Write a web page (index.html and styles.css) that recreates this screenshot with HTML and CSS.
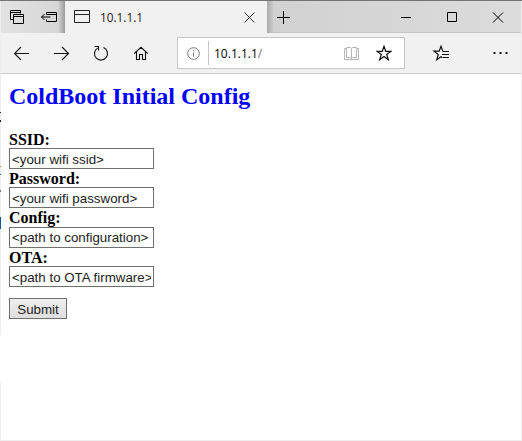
FILE: index.html
```html
<!DOCTYPE html>
<html lang="en">
<head>
<meta charset="utf-8">
<title>ColdBoot Initial Config</title>
<link rel="stylesheet" href="styles.css">
</head>
<body>
<div class="desktop-top"></div>
<div class="desktop-left"><i class="m1"></i><i class="m2"></i><i class="m3"></i><i class="m4"></i><i class="m5"></i><i class="m6"></i></div>
<div class="window">
  <header class="titlebar">
    <div class="tab-tools">
      <svg width="64" height="32" viewBox="0 0 64 32" fill="none" stroke="#000">
        <path d="M12.5 18.5h-3v-9h10v3M9.5 11.5h10M12.5 13.5h10v9h-10zM12.5 15.5h10"/>
        <path d="M45.5 13.500v-2h10v9h-10v-2M45.500 13.500h10M40.500 16h9M43.500 13l-3 3 3 3"/>
      </svg>
    </div>
    <div class="tab">
      <svg class="page-icon" width="16" height="14" fill="none" stroke="#222"><path d="M.5 .5h15v12H.5zM.5 4.500h15"/></svg>
      <span class="tab-title">10.1.1.1</span>
      <svg class="tab-close" width="11" height="11" fill="none" stroke="#333"><path d="M.5.5l10 10M10.500.5l-10 10"/></svg>
    </div>
    <div class="title-rest">
      <svg width="254" height="32" fill="none" stroke="#000">
        <path d="M10 16.500h13M16.500 10v13"/>
        <path d="M134 16.500h10M180.500 11.500h9v9h-9zM226 11.500l10 10M236 11.500l-10 10"/>
      </svg>
    </div>
  </header>
  <nav class="toolbar">
    <svg class="nav-icons" width="176" height="40" fill="none" stroke="#111" stroke-width="1.1">
      <path d="M13.500 20.500H28M20 14l-6.500 6.500L20 27"/>
      <path d="M53 20.500h14.500M61 14l6.500 6.500L61 27"/>
      <path d="M102.500 14.600a6.500 6.500 0 1 1-6 .5M93.500 13.500h4v4"/>
      <path d="M133.300 20.500l6.700-6.200 6.700 6.200M135.500 19v7.500h3v-5h3v5h3V19"/>
    </svg>
    <div class="address">
      <svg class="info" width="13" height="13" fill="none" stroke="#777"><circle cx="6.500" cy="6.500" r="5.800"/><path d="M6.500 5.500v4M6.500 3v1.200"/></svg>
      <span class="divider"></span>
      <span class="url">10.1.1.1<span class="slash">/</span></span>
      <svg class="reading" width="15" height="15" fill="none" stroke="#b5b5b5"><path d="M2.500 1.500h4l1 1 1-1h4v10h-4l-1 1-1-1h-4zM7.500 2.500v11M2.500 2.500h-2v11h14v-11h-2"/></svg>
      <svg class="star" width="16" height="16" fill="none" stroke="#111" stroke-width="1.200"><path d="M8 1.300l1.700 5h5.300l-4.300 3.200 1.600 5.200L8 11.500l-4.300 3.200 1.600-5.200L1 6.300h5.300z"/></svg>
    </div>
    <svg class="actions" width="115" height="40" fill="none" stroke="#111">
      <path stroke-width="1.200" d="M37.800 18.200L36 13.300l-1.800 4.900H29l4.300 3.400-1.600 5.200L36 23.800l1.500 1"/>
      <path d="M37.500 18.500H44M37 21.500h7M38 24.500h6"/>
      <path stroke-width="2" d="M88.500 20h2M94.500 20h2M100.500 20h2"/>
    </svg>
  </nav>
  <main class="page">
    <h2>ColdBoot Initial Config</h2>
    <form>
      <label for="ssid">SSID:</label>
      <input id="ssid" type="text" value="&lt;your wifi ssid&gt;">
      <label for="password">Password:</label>
      <input id="password" type="text" value="&lt;your wifi password&gt;">
      <label for="config">Config:</label>
      <input id="config" type="text" value="&lt;path to configuration&gt;">
      <label for="ota">OTA:</label>
      <input id="ota" type="text" value="&lt;path to OTA firmware&gt;">
      <button type="button">Submit</button>
    </form>
  </main>
</div>
</body>
</html>
```
FILE: styles.css
```css
* { box-sizing: border-box; }
html, body { margin: 0; height: 441px; overflow: hidden; }
body {
  display: grid;
  grid-template: 1px 440px / 1px 521px;
  background: #fff;
}
svg { display: block; flex: none; }
.desktop-top { grid-column: 1 / 3; background: #777375; }
.desktop-left {
  position: relative;
  background: linear-gradient(#eee 334px, #fff 334px, #fff 381px, #eee 381px);
}
.desktop-left i { position: absolute; left: 0; width: 1px; height: 1px; background: #222; }
.desktop-left .m1 { top: 111px; }
.desktop-left .m2 { top: 119px; height: 2px; }
.desktop-left .m3 { top: 165px; background: #c77b42; }
.desktop-left .m4 { top: 173px; background: #235b9b; }
.desktop-left .m5 { top: 189px; height: 2px; background: #777; }
.desktop-left .m6 { top: 216px; height: 12px; background: #0b5394; }
.window {
  display: flex;
  flex-direction: column;
  border-right: 1px solid #eee;
  border-bottom: 1px solid #eee;
}
.titlebar { display: flex; height: 32px; }
.tab-tools {
  width: 64px;
  background: linear-gradient(90deg, transparent 57px, #999 64px), linear-gradient(90deg, #e2e2e2, #d5d5d5);
}
.tab {
  display: flex;
  align-items: center;
  width: 202px;
  padding: 0 12px 0 9px;
  background: #f1f1f1;
}
.tab-title {
  flex: 1;
  padding-left: 10px;
  font: 11.800px/16px "Open Sans", "Noto Sans", sans-serif;
  color: #222;
}
.title-rest {
  width: 254px;
  background: linear-gradient(90deg, #aaa, transparent 7px), linear-gradient(transparent 31px, #c6c6c6 31px), linear-gradient(90deg, #d1d1d1, #dcdcdc);
}
.toolbar {
  display: flex;
  align-items: center;
  height: 41px;
  background: #f1f1f1;
  border-bottom: 1px solid #ccc;
}
.address {
  display: flex;
  align-items: center;
  width: 228px;
  height: 32px;
  padding: 0 12px 0 9px;
  background: #fff;
  border: 1px solid #c6c6c6;
}
.divider { width: 1px; height: 24px; margin: 0 5px 0 8px; background: #c4c4c4; }
.url { flex: 1; padding-top: 1px; font: 12px/16px "Open Sans", "Noto Sans", sans-serif; color: #000; }
.slash { color: #777; }
.star { margin-left: 17px; }
.page { padding: 9px 8px; font: 16px "Liberation Serif", serif; }
h2 { margin: 0 0 19.500px; font-size: 24px; line-height: 27px; color: #00f; }
form { display: flex; flex-direction: column; align-items: flex-start; }
label { height: 18.400px; font-size: 16px; font-weight: bold; line-height: 20px; }
input {
  width: 145px;
  height: 21px;
  padding: 1.700px 2px 0.300px;
  border: 1px solid #707070;
  border-radius: 0;
  background: #fff;
  font: 13.330px "Liberation Sans", sans-serif;
  color: #222;
}
button {
  width: 58px;
  height: 21px;
  margin-top: 11px;
  padding: 2px 0 0;
  border: 1px solid #707070;
  border-radius: 0;
  background: linear-gradient(#eee, #dedede);
  font: 13.330px "Liberation Sans", sans-serif;
  color: #222;
}
```
